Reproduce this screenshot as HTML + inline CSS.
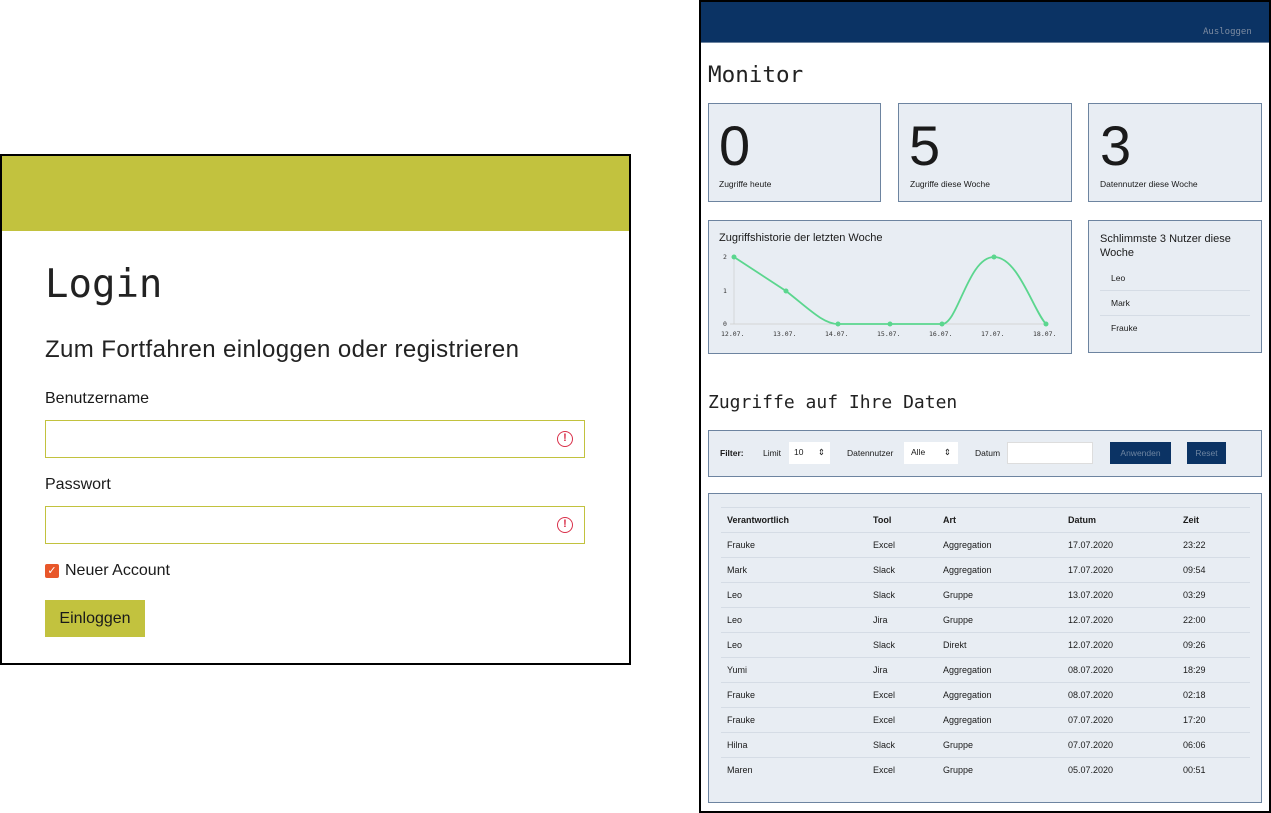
<!DOCTYPE html>
<html><head><meta charset="utf-8"><style>
*{box-sizing:border-box;margin:0;padding:0}
body{width:1271px;height:813px;background:#fff;position:relative;font-family:"Liberation Sans",sans-serif;color:#1a1a1a;overflow:hidden}
.abs{position:absolute}
.mono{font-family:"DejaVu Sans Mono",monospace}
.card{position:absolute;background:#e8edf3;border:1px solid #6d84a0}
.inp{position:absolute;left:45px;width:540px;height:38px;border:1px solid #c2c23e;background:#fff}
.warn{position:absolute;right:11px;top:10px;width:16px;height:16px;border:1.5px solid #d9304a;border-radius:50%;color:#d9304a;font-size:11px;font-weight:bold;text-align:center;line-height:13px}
td,th{font-size:9px;text-align:left;height:25px;border-top:1px solid #d5dce5;padding-left:6px}
th{font-weight:bold}
</style></head><body>
<!-- login -->
<div class="abs" style="left:0;top:154px;width:631px;height:511px;border:2px solid #000">
 <div style="height:75px;background:#c2c23e"></div>
</div>
<div class="abs mono" style="left:45px;top:262px;font-size:39px;color:#222">Login</div>
<div class="abs" style="left:45px;top:336px;font-size:24px;letter-spacing:0.4px;color:#222">Zum Fortfahren einloggen oder registrieren</div>
<div class="abs" style="left:45px;top:390px;font-size:16px">Benutzername</div>
<div class="inp" style="top:420px"><div class="warn">!</div></div>
<div class="abs" style="left:45px;top:476px;font-size:16px">Passwort</div>
<div class="inp" style="top:506px"><div class="warn">!</div></div>
<div class="abs" style="left:45px;top:564px;width:14px;height:14px;background:#e8572a;border-radius:2px;color:#fff;font-size:11px;line-height:14px;text-align:center">✓</div>
<div class="abs" style="left:65px;top:562px;font-size:16px">Neuer Account</div>
<div class="abs" style="left:45px;top:600px;width:100px;height:37px;background:#c2c23e;font-size:16px;line-height:37px;text-align:center">Einloggen</div>

<!-- dashboard -->
<div class="abs" style="left:699px;top:0;width:572px;height:813px;border:2px solid #000">
 <div style="height:41px;background:#0b3364;border-bottom:1px solid #6d84a0"></div>
</div>
<div class="abs mono" style="left:1203px;top:27px;font-size:9px;color:#7b8aa0">Ausloggen</div>
<div class="abs mono" style="left:708px;top:62px;font-size:22.6px;color:#222">Monitor</div>

<div class="card" style="left:708px;top:103px;width:173px;height:99px"></div>
<div class="card" style="left:898px;top:103px;width:174px;height:99px"></div>
<div class="card" style="left:1088px;top:103px;width:174px;height:99px"></div>
<div class="abs" style="left:719px;top:116px;font-size:56px;line-height:60px">0</div>
<div class="abs" style="left:909px;top:116px;font-size:56px;line-height:60px">5</div>
<div class="abs" style="left:1100px;top:116px;font-size:56px;line-height:60px">3</div>
<div class="abs" style="left:719px;top:179px;font-size:8.5px">Zugriffe heute</div>
<div class="abs" style="left:910px;top:179px;font-size:8.5px">Zugriffe diese Woche</div>
<div class="abs" style="left:1100px;top:179px;font-size:8.5px">Datennutzer diese Woche</div>

<div class="card" style="left:708px;top:220px;width:364px;height:134px"></div>
<div class="abs" style="left:719px;top:232px;font-size:11px">Zugriffshistorie der letzten Woche</div>
<svg class="abs" style="left:708px;top:220px" width="364" height="134">
 <g font-family="DejaVu Sans Mono,monospace" font-size="6.5" fill="#333">
  <text x="15" y="39">2</text><text x="15" y="73">1</text><text x="15" y="106">0</text>
  <text x="13" y="116">12.07.</text><text x="65" y="116">13.07.</text><text x="117" y="116">14.07.</text><text x="169" y="116">15.07.</text><text x="221" y="116">16.07.</text><text x="273" y="116">17.07.</text><text x="325" y="116">18.07.</text>
 </g>
 <line x1="26" y1="37" x2="26" y2="104" stroke="#ccc" stroke-width="0.7"/>
 <line x1="22" y1="104" x2="340" y2="104" stroke="#ccc" stroke-width="0.7"/>
 <path d="M26 37 L78 71 C100 88 115 104 130 104 L234 104 C250 104 260 37 286 37 C310 37 325 90 338 104" fill="none" stroke="#5bd68e" stroke-width="1.8"/>
 <g fill="#5bd68e"><circle cx="26" cy="37" r="2.5"/><circle cx="78" cy="71" r="2.5"/><circle cx="130" cy="104" r="2.5"/><circle cx="182" cy="104" r="2.5"/><circle cx="234" cy="104" r="2.5"/><circle cx="286" cy="37" r="2.5"/><circle cx="338" cy="104" r="2.5"/></g>
</svg>

<div class="card" style="left:1088px;top:220px;width:174px;height:133px"></div>
<div class="abs" style="left:1100px;top:232px;font-size:11px;line-height:14px;width:155px">Schlimmste 3 Nutzer diese Woche</div>
<div class="abs" style="left:1100px;top:266px;width:150px;font-size:8.5px">
 <div style="height:25px;line-height:25px;padding-left:11px;border-bottom:1px solid #d5dce5">Leo</div>
 <div style="height:25px;line-height:25px;padding-left:11px;border-bottom:1px solid #d5dce5">Mark</div>
 <div style="height:25px;line-height:25px;padding-left:11px">Frauke</div>
</div>

<div class="abs mono" style="left:708px;top:392px;font-size:18px;color:#222">Zugriffe auf Ihre Daten</div>

<div class="card" style="left:708px;top:430px;width:554px;height:47px"></div>
<div class="abs" style="left:720px;top:448px;font-size:8.5px;font-weight:bold">Filter:</div>
<div class="abs" style="left:763px;top:448px;font-size:8.5px">Limit</div>
<div class="abs" style="left:789px;top:442px;width:41px;height:22px;background:#fff;font-size:8.5px;padding:5px 5px">10<span style="float:right">⇕</span></div>
<div class="abs" style="left:847px;top:448px;font-size:8.5px">Datennutzer</div>
<div class="abs" style="left:904px;top:442px;width:54px;height:22px;background:#fff;font-size:8.5px;padding:5px 7px">Alle<span style="float:right">⇕</span></div>
<div class="abs" style="left:975px;top:448px;font-size:8.5px">Datum</div>
<div class="abs" style="left:1007px;top:442px;width:86px;height:22px;background:#fff;border:1px solid #ddd"></div>
<div class="abs" style="left:1110px;top:442px;width:61px;height:22px;background:#0b3364;color:#6d84a0;font-size:8.5px;line-height:22px;text-align:center">Anwenden</div>
<div class="abs" style="left:1187px;top:442px;width:39px;height:22px;background:#0b3364;color:#6d84a0;font-size:8.5px;line-height:22px;text-align:center">Reset</div>

<div class="card" style="left:708px;top:493px;width:554px;height:310px"></div>
<table class="abs" style="left:721px;top:507px;width:529px;border-collapse:collapse">
<tr><th style="width:146px">Verantwortlich</th><th style="width:70px">Tool</th><th style="width:125px">Art</th><th style="width:115px">Datum</th><th>Zeit</th></tr>
<tr><td>Frauke</td><td>Excel</td><td>Aggregation</td><td>17.07.2020</td><td>23:22</td></tr>
<tr><td>Mark</td><td>Slack</td><td>Aggregation</td><td>17.07.2020</td><td>09:54</td></tr>
<tr><td>Leo</td><td>Slack</td><td>Gruppe</td><td>13.07.2020</td><td>03:29</td></tr>
<tr><td>Leo</td><td>Jira</td><td>Gruppe</td><td>12.07.2020</td><td>22:00</td></tr>
<tr><td>Leo</td><td>Slack</td><td>Direkt</td><td>12.07.2020</td><td>09:26</td></tr>
<tr><td>Yumi</td><td>Jira</td><td>Aggregation</td><td>08.07.2020</td><td>18:29</td></tr>
<tr><td>Frauke</td><td>Excel</td><td>Aggregation</td><td>08.07.2020</td><td>02:18</td></tr>
<tr><td>Frauke</td><td>Excel</td><td>Aggregation</td><td>07.07.2020</td><td>17:20</td></tr>
<tr><td>Hilna</td><td>Slack</td><td>Gruppe</td><td>07.07.2020</td><td>06:06</td></tr>
<tr><td>Maren</td><td>Excel</td><td>Gruppe</td><td>05.07.2020</td><td>00:51</td></tr>
</table>
</body></html>
